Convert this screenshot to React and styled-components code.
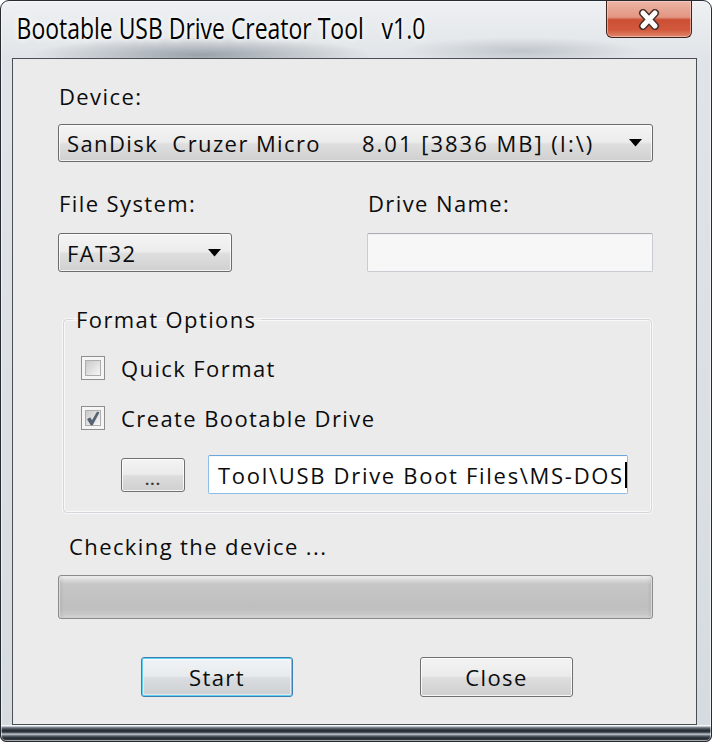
import React from "react";
import styled, { createGlobalStyle, css } from "styled-components";

const Global = createGlobalStyle`
  html, body { margin: 0; padding: 0; background: #ffffff; }
  body {
    width: 712px; height: 742px; overflow: hidden;
    font-family: "Open Sans", "Noto Sans", sans-serif;
    -webkit-font-smoothing: antialiased;
  }
  *, *::before, *::after { box-sizing: border-box; }
`;

const textFont = css`
  font-family: "Open Sans", "Noto Sans", sans-serif;
  font-size: 22px;
  line-height: 30px;
  letter-spacing: 1.4px;
  color: #0c0c0c;
`;

const Window = styled.div`
  width: 712px;
  height: 742px;
  display: flex;
  flex-direction: column;
  border: 1px solid #262b31;
  border-radius: 9px 9px 6px 6px;
  padding: 0 14px 16px 11px;
  box-shadow: inset 0 0 0 1px rgba(255, 255, 255, 0.55);
  background:
    linear-gradient(
        to bottom,
        #f4f6f8 0px,
        #f4f6f8 1px,
        #8e97a1 2px,
        #434b55 4px,
        #1f242a 6px,
        #5b6570 8px,
        #cfd4da 9px,
        #565f69 11px,
        #262b31 13px,
        #3b424a 16px
      )
      bottom / 100% 16px no-repeat,
    radial-gradient(ellipse 170px 18px at 200px 54px, rgba(125, 133, 143, 0.7), transparent),
    radial-gradient(ellipse 120px 14px at 520px 50px, rgba(150, 158, 168, 0.45), transparent),
    linear-gradient(180deg, #eef0f2 0%, #e0e4e8 8%, #d6dbe0 100%);
`;

const TitleBar = styled.div`
  height: 57px;
  flex-shrink: 0;
  display: flex;
  align-items: flex-start;
  justify-content: space-between;
`;

const Title = styled.h1`
  margin: 0;
  padding: 9px 0 0 6px;
  font-family: "Open Sans", "Noto Sans", sans-serif;
  font-weight: 400;
  font-size: 30px;
  line-height: 36px;
  color: #000;
  white-space: pre;
  transform: scaleX(0.765);
  transform-origin: left center;
  text-shadow: 0 0 10px rgba(255, 255, 255, 0.95), 0 0 4px rgba(255, 255, 255, 0.9);
`;

const CloseBox = styled.button`
  width: 86px;
  height: 37px;
  margin: 0 5px 0 0;
  padding: 0;
  border: 1px solid #3f231d;
  border-top: none;
  border-radius: 0 0 6px 6px;
  display: flex;
  align-items: center;
  justify-content: center;
  background: linear-gradient(
    180deg,
    #ecb4a6 0%,
    #e39682 45%,
    #cb4f34 52%,
    #d2583c 80%,
    #df856a 100%
  );
  box-shadow: inset 0 0 0 1px rgba(255, 215, 205, 0.55);
`;

const CloseGlyph = styled.svg`
  width: 24px;
  height: 21px;
  display: block;
`;

const Client = styled.div`
  flex: 1;
  display: flex;
  flex-direction: column;
  border: 1px solid #4a4f56;
  background: #ebebeb;
  padding: 22px 43px 0 45px;
`;

const Label = styled.div`
  ${textFont};
  padding-left: 1px;
  margin-left: ${(p) => p.$indent || 0}px;
  margin-top: ${(p) => p.$top || 0}px;
  white-space: pre;
`;

const Combo = styled.div`
  ${textFont};
  height: ${(p) => p.$h || 38}px;
  margin-top: ${(p) => p.$top || 0}px;
  display: flex;
  align-items: center;
  border: 1px solid #6b6b6b;
  border-radius: 3px;
  padding: 0 10px 0 8px;
  background: linear-gradient(180deg, #f4f4f4 0%, #ececec 47%, #dedede 53%, #d0d0d0 100%);
  box-shadow: inset 0 0 0 1px rgba(255, 255, 255, 0.75);
`;

const ComboText = styled.div`
  flex: 1;
  display: flex;
  white-space: pre;
  overflow: hidden;
`;

const NameCol = styled.span`
  width: 295px;
  flex: none;
`;

const SpecCol = styled.span`
  letter-spacing: 2px;
`;

const ArrowSvg = styled.svg`
  width: 13px;
  height: 8px;
  flex: none;
  display: block;
`;

const Arrow = () => (
  <ArrowSvg viewBox="0 0 13 8">
    <polygon points="0,0 13,0 6.5,7.5" fill="#000" />
  </ArrowSvg>
);

const FieldGrid = styled.div`
  display: grid;
  grid-template-columns: 174px 1fr;
  column-gap: 135px;
  row-gap: 15px;
  margin-top: 26px;
`;

const TextInput = styled.div`
  ${textFont};
  height: 39px;
  flex: ${(p) => (p.$grow ? 1 : "none")};
  margin-left: ${(p) => p.$left || 0}px;
  display: flex;
  align-items: center;
  padding: 0 0 0 9px;
  white-space: pre;
  overflow: hidden;
  letter-spacing: ${(p) => (p.$focus ? "1.7px" : "1.4px")};
  border: 1px solid ${(p) => (p.$focus ? "#8fbde9" : "#c8cbcf")};
  border-top-color: ${(p) => (p.$focus ? "#6aa6dc" : "#abadb3")};
  border-radius: 2px;
  background: ${(p) => (p.$focus ? "#ffffff" : "#f7f7f7")};
  box-shadow: inset 0 1px 0 rgba(0, 0, 0, 0.03);
`;

const Caret = styled.span`
  width: 2px;
  height: 26px;
  background: #000;
  flex: none;
  margin-left: 1px;
`;

const Group = styled.fieldset`
  margin: 32px 1px 0 5px;
  padding: 19px 23px 18px 17px;
  min-width: 0;
  border: 1px solid #d3d7db;
  border-radius: 4px;
  box-shadow: inset 0 0 0 1px #f8f8f8, 0 0 0 1px rgba(255, 255, 255, 0.6);
`;

const Legend = styled.legend`
  ${textFont};
  padding: 0 4px 0 3px;
  margin-left: -8px;
`;

const CheckRow = styled.label`
  ${textFont};
  display: flex;
  align-items: center;
  gap: 16px;
  height: 30px;
  margin-top: ${(p) => p.$top || 0}px;
`;

const CheckBox = styled.span`
  width: 24px;
  height: 24px;
  flex: none;
  padding: 3px;
  display: flex;
  border: 1px solid #8e8f8f;
  background: #f5f5f5;
`;

const CheckInner = styled.span`
  flex: 1;
  display: flex;
  align-items: center;
  justify-content: center;
  border: 1px solid #adadad;
  background: linear-gradient(135deg, #c9c9c9 0%, #e2e2e2 55%, #f7f7f7 100%);
`;

const CheckSvg = styled.svg`
  width: 14px;
  height: 15px;
  display: block;
`;

const Check = ({ checked }) => (
  <CheckBox>
    <CheckInner>
      {checked && (
        <CheckSvg viewBox="0 0 14 15">
          <path
            d="M1.5 8.2 L4.2 6.8 L6 10 L11.2 1 L13 1.6 L6.4 14 L5 14 Z"
            fill="#556476"
            stroke="#3d4a5a"
            strokeWidth="0.6"
          />
        </CheckSvg>
      )}
    </CheckInner>
  </CheckBox>
);

const PathRow = styled.div`
  display: flex;
  align-items: center;
  height: 39px;
  margin-top: 22px;
`;

const Button = styled.button`
  ${textFont};
  width: ${(p) => p.$w}px;
  height: ${(p) => p.$h || 40}px;
  margin-left: ${(p) => p.$left || 0}px;
  padding: 0;
  flex: none;
  border: 1px solid ${(p) => (p.$default ? "#3c7fb1" : "#707070")};
  border-radius: 3px;
  background: ${(p) =>
    p.$default
      ? "linear-gradient(180deg, #f1f4f6 0%, #e8ebed 48%, #dadddf 52%, #ccd0d3 100%)"
      : "linear-gradient(180deg, #f3f3f3 0%, #ebebeb 48%, #dddddd 52%, #cfcfcf 100%)"};
  box-shadow: ${(p) =>
    p.$default
      ? "inset 0 0 0 1px #5fd0f3, inset 0 0 0 2px rgba(255,255,255,0.5)"
      : "inset 0 0 0 1px rgba(255,255,255,0.8)"};
`;

const DotsLabel = styled.span`
  display: block;
  font-size: 15px;
  font-weight: 700;
  line-height: 15px;
  letter-spacing: 1px;
  color: #3a3a3a;
  padding-top: 10px;
`;

const Progress = styled.div`
  height: 44px;
  margin-top: 14px;
  border: 1px solid #8a8b8c;
  border-radius: 3px;
  background: linear-gradient(
    180deg,
    #f6f6f6 0px,
    #dedede 3px,
    #c6c6c6 8px,
    #bfbfbf 75%,
    #c8c8c8 92%,
    #dadada 100%
  );
  box-shadow: inset 1px 0 0 #d8d8d8, inset -1px 0 0 #d8d8d8, inset 3px 0 3px rgba(0, 0, 0, 0.05),
    inset -3px 0 3px rgba(0, 0, 0, 0.05);
`;

const ButtonRow = styled.div`
  display: flex;
  gap: 127px;
  margin-top: 38px;
  padding-left: 83px;
`;

export default function App() {
  return (
    <>
      <Global />
      <Window>
        <TitleBar>
          <Title>{"Bootable USB Drive Creator Tool   v1.0"}</Title>
          <CloseBox aria-label="Close">
            <CloseGlyph viewBox="0 0 24 21">
              <path
                d="M6 4 L18 17 M18 4 L6 17"
                stroke="#4a302a"
                strokeWidth="8"
                strokeLinecap="round"
                fill="none"
              />
              <path
                d="M6 4 L18 17 M18 4 L6 17"
                stroke="#ffffff"
                strokeWidth="5"
                strokeLinecap="round"
                fill="none"
              />
            </CloseGlyph>
          </CloseBox>
        </TitleBar>
        <Client>
          <Label>Device:</Label>
          <Combo $top={13}>
            <ComboText>
              <NameCol>{"SanDisk  Cruzer Micro"}</NameCol>
              <SpecCol>{"8.01 [3836 MB] (I:\\)"}</SpecCol>
            </ComboText>
            <Arrow />
          </Combo>

          <FieldGrid>
            <Label>File System:</Label>
            <Label>Drive Name:</Label>
            <Combo $h={39}>
              <ComboText>FAT32</ComboText>
              <Arrow />
            </Combo>
            <TextInput />
          </FieldGrid>

          <Group>
            <Legend>Format Options</Legend>
            <CheckRow>
              <Check />
              <span>Quick Format</span>
            </CheckRow>
            <CheckRow $top={20}>
              <Check checked />
              <span>Create Bootable Drive</span>
            </CheckRow>
            <PathRow>
              <Button $w={64} $h={34} $left={40}>
                <DotsLabel>...</DotsLabel>
              </Button>
              <TextInput $grow $left={23} $focus>
                {"Tool\\USB Drive Boot Files\\MS-DOS"}
                <Caret />
              </TextInput>
            </PathRow>
          </Group>

          <Label $top={18} $indent={10}>Checking the device ...</Label>
          <Progress />

          <ButtonRow>
            <Button $w={152} $default>Start</Button>
            <Button $w={153}>Close</Button>
          </ButtonRow>
        </Client>
      </Window>
    </>
  );
}
